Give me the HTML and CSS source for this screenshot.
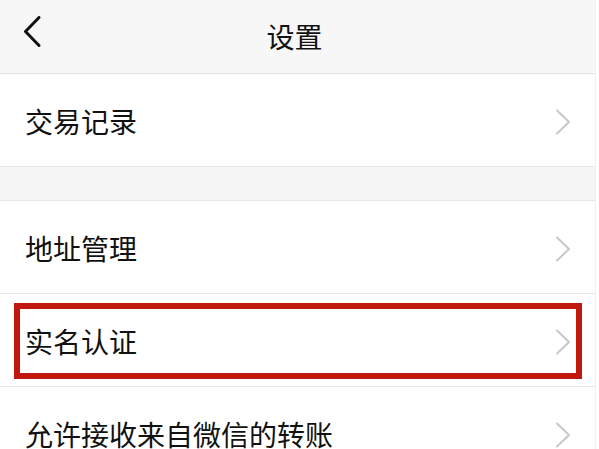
FILE: index.html
```html
<!DOCTYPE html>
<html lang="zh-CN">
<head>
<meta charset="utf-8">
<title>设置</title>
<link rel="stylesheet" href="styles.css">
</head>
<body>
<div class="screen">
  <header class="nav">
    <svg class="back" width="18" height="31" viewBox="0 0 18 31"><polyline points="16,1.5 2.5,15.5 16,29.5" fill="none" stroke="#111" stroke-width="3" stroke-linecap="round" stroke-linejoin="round"/></svg>
    <h1 class="title">设置</h1>
  </header>
  <div class="group">
    <div class="row"><span class="label">交易记录</span><svg class="arrow" width="16" height="26" viewBox="0 0 16 26"><polyline points="2,1.5 14,13 2,24.5" fill="none" stroke="#c8c8c8" stroke-width="2" stroke-linecap="round" stroke-linejoin="round"/></svg></div>
  </div>
  <div class="spacer"></div>
  <div class="group">
    <div class="row"><span class="label">地址管理</span><svg class="arrow" width="16" height="26" viewBox="0 0 16 26"><polyline points="2,1.5 14,13 2,24.5" fill="none" stroke="#c8c8c8" stroke-width="2" stroke-linecap="round" stroke-linejoin="round"/></svg></div>
    <div class="row highlighted"><span class="label">实名认证</span><svg class="arrow" width="16" height="26" viewBox="0 0 16 26"><polyline points="2,1.5 14,13 2,24.5" fill="none" stroke="#c8c8c8" stroke-width="2" stroke-linecap="round" stroke-linejoin="round"/></svg><span class="mark"></span></div>
    <div class="row"><span class="label">允许接收来自微信的转账</span><svg class="arrow" width="16" height="26" viewBox="0 0 16 26"><polyline points="2,1.5 14,13 2,24.5" fill="none" stroke="#c8c8c8" stroke-width="2" stroke-linecap="round" stroke-linejoin="round"/></svg></div>
  </div>
</div>
</body>
</html>
```
FILE: styles.css
```css
html, body {
  margin: 0;
  padding: 0;
  background: #ffffff;
  overflow: hidden;
}
.screen {
  width: 595px;
  height: 449px;
  overflow: hidden;
  border-right: 1px solid #f0f0f0;
  font-family: "Noto Sans CJK SC", "Noto Sans", sans-serif;
  color: #111111;
  background: #ffffff;
}
.nav {
  height: 73px;
  background: #f7f7f7;
  border-bottom: 1px solid #e3e3e3;
  display: flex;
  align-items: center;
  justify-content: center;
  position: relative;
}
.back {
  position: absolute;
  left: 23px;
  top: 16px;
}
.title {
  margin: 0;
  font-size: 28px;
  font-weight: 400;
  line-height: 1;
  margin-top: -2px;
  margin-left: -6px;
}
.group {
  background: #ffffff;
}
.row {
  height: 92px;
  border-bottom: 1px solid #e6e6e6;
  display: flex;
  align-items: center;
  justify-content: space-between;
  padding: 0 24px 0 25px;
  position: relative;
}
.label {
  font-size: 28px;
  line-height: 1;
  margin-top: 1px;
}
.arrow {
  margin-top: 3px;
}
.spacer {
  height: 33px;
  background: #f5f5f5;
  border-bottom: 1px solid #e6e6e6;
}
.mark {
  position: absolute;
  left: 14px;
  top: 9px;
  width: 556px;
  height: 64px;
  border: 6px solid #c0170f;
}
```
